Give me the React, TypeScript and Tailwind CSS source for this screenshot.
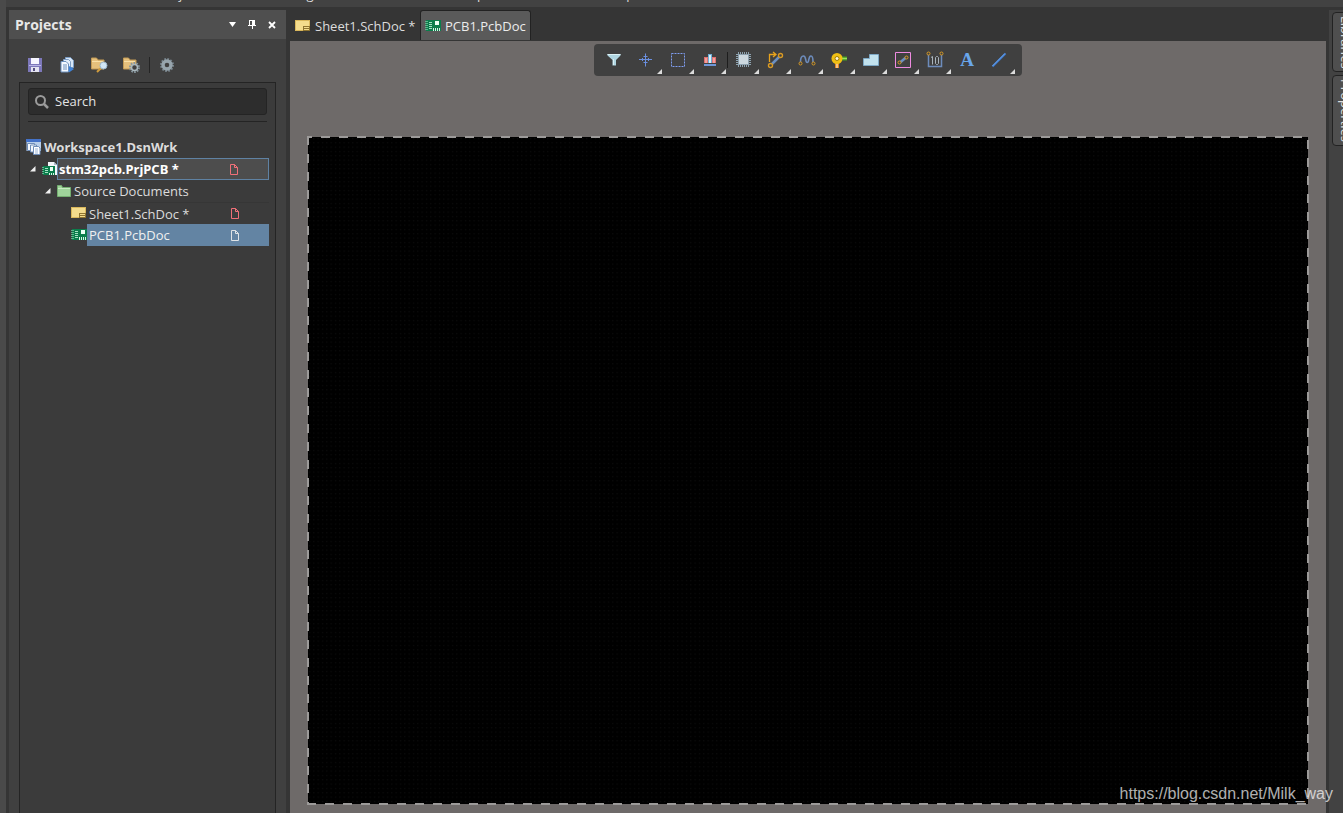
import type { ReactNode } from "react";

function PcbIcon() {
  return (
    <svg width="16" height="14" viewBox="0 0 16 14" shapeRendering="crispEdges" aria-hidden="true">
      <rect x="1" y="1" width="15" height="11" fill="#0b7d4c" />
      <path d="M0 2h3v1H0zM0 4h3v1H0zM0 6h3v1H0zM0 8h3v1H0zM0 10h3v1H0z" fill="#5fb68c" />
      <path d="M4 3h3v1H4zM4 5h3v1H4zM4 7h3v1H4zM4 9h3v1H4z" fill="#a5e0c3" />
      <rect x="10" y="2" width="4" height="4" fill="#eafff4" />
      <path d="M8 9h1v3H8zM10 9h1v3h-1zM12 9h1v3h-1zM14 9h1v3h-1z" fill="#d6f3e4" />
    </svg>
  );
}

function SheetIcon() {
  return (
    <svg width="16" height="12" viewBox="0 0 16 12" shapeRendering="crispEdges" aria-hidden="true">
      <rect x="0" y="0" width="15" height="11" fill="#d9b75c" />
      <rect x="1" y="1" width="13" height="9" fill="#f4dc8d" />
      <path d="M8 6h7v5H8z" fill="#8f7430" />
      <path d="M9 7h5v1H9zM9 9h5v1H9z" fill="#f4dc8d" />
    </svg>
  );
}

function WorkspaceIcon() {
  return (
    <svg width="16" height="16" viewBox="0 0 16 16" aria-hidden="true">
      <path d="M.5 1h14.500v11H.5z" fill="#b9cfea" />
      <path d="M0 0h15v3H0z" fill="#4472c8" />
      <path d="M1.500 4.500h7v7h-7z" fill="#f4f8fd" stroke="#6f8db8" />
      <path d="M4.500 6h6v7h-6z" fill="#f4f8fd" stroke="#6f8db8" />
      <path d="M7.500 7.500h5l1.500 1.500v6.500H7.500z" fill="#fff" stroke="#6f8db8" />
      <path d="M9 10h3M9 12h3M9 14h3" stroke="#9bb4d6" />
    </svg>
  );
}

function ProjectIcon() {
  return (
    <svg width="16" height="16" viewBox="0 0 16 16" aria-hidden="true">
      <path d="M6 1h6l3 3v10H6z" fill="#f3f6fa" />
      <path d="M12 1v3h3" fill="#aebdcc" />
      <g shapeRendering="crispEdges">
        <rect x="1" y="5" width="12" height="9" fill="#0b7d4c" />
        <path d="M0 6h2v1H0zM0 8h2v1H0zM0 10h2v1H0zM0 12h2v1H0z" fill="#5fb68c" />
        <path d="M3 7h3v1H3zM3 9h3v1H3zM3 11h3v1H3z" fill="#a5e0c3" />
        <path d="M8 6h3v4H8z" fill="#eafff4" />
        <path d="M7 12h1v2H7zM9 12h1v2H9zM11 12h1v2h-1z" fill="#d6f3e4" />
      </g>
    </svg>
  );
}

function GreenFolderIcon() {
  return (
    <svg width="14" height="12" viewBox="0 0 14 12" aria-hidden="true">
      <path d="M.5 11.500V.5h4l1 2h8v9z" fill="#9fd39a" stroke="#74ae70" />
      <path d="M1 3.500h12" stroke="#c7ebc2" />
    </svg>
  );
}

function PageIcon({ modified }: { modified: boolean }) {
  return (
    <svg
      className={modified ? "text-[#f07078]" : "text-[#dfe3e6]"}
      width="9"
      height="11"
      viewBox="0 0 9 11"
      role="img"
      aria-label={modified ? "Modified" : "Saved"}
    >
      <path d="M1.500 .5h4l3 3v7h-7zM5.500.5v3h3" fill="none" stroke="currentColor" />
    </svg>
  );
}

function SaveIcon() {
  return (
    <svg width="14" height="14" viewBox="0 0 14 14" shapeRendering="crispEdges" aria-hidden="true">
      <path d="M0 0h14v14H0z" fill="#7d78ba" />
      <path d="M3 0h8v6H3z" fill="#f6f6ff" />
      <path d="M1 7h12v1H1z" fill="#b8b4e6" />
      <path d="M3 9h8v5H3z" fill="#e4e4f2" />
      <path d="M5 10h2v3H5z" fill="#555080" />
    </svg>
  );
}

function CompileIcon() {
  return (
    <svg width="15" height="16" viewBox="0 0 15 16" aria-hidden="true">
      <path d="M5.500.5h5l3 3v7h-8z" fill="#d7e7f8" stroke="#7c9dc4" />
      <path d="M3.500 2.500h5l2 2v8h-7z" fill="#e2eefb" stroke="#7c9dc4" />
      <path d="M1 4.500h5l2.500 2.500v8H1z" fill="#f4f9ff" stroke="#6c90bd" />
      <path d="M3 8h4M3 10h4M3 12h4" stroke="#6c90bd" />
      <path d="M9 9l5 3-5 3.500z" fill="#3f83d8" />
    </svg>
  );
}

function FolderSearchIcon() {
  return (
    <svg width="17" height="16" viewBox="0 0 17 16" aria-hidden="true">
      <path d="M.5 12V1h5l1.500 2H13v9z" fill="#e5c07c" stroke="#c29a55" />
      <path d="M1 4.500h11" stroke="#f8e0a8" />
      <path d="M10 11l-4 4" stroke="#d09c3e" strokeWidth="2" />
      <circle cx="12.500" cy="8.500" r="3.500" fill="#d2e6f5" stroke="#9bb5c9" />
    </svg>
  );
}

function FolderGearIcon() {
  return (
    <svg width="17" height="16" viewBox="0 0 17 16" aria-hidden="true">
      <path d="M.5 12V1h5l1.500 2H13v9z" fill="#e5c07c" stroke="#c29a55" />
      <path d="M1 4.500h11" stroke="#f8e0a8" />
      <circle cx="11.500" cy="10.500" r="3" fill="#404040" />
      <circle cx="11.500" cy="10.500" r="4.500" fill="none" stroke="#84939b" strokeWidth="2" strokeDasharray="1.700 1.100" />
      <circle cx="11.500" cy="10.500" r="3" fill="none" stroke="#aab8be" strokeWidth="1.500" />
    </svg>
  );
}

function SettingsIcon() {
  return (
    <svg width="14" height="14" viewBox="0 0 14 14" aria-hidden="true">
      <circle cx="7" cy="7" r="6" fill="none" stroke="#77848c" strokeWidth="2" strokeDasharray="1.700 1.400" />
      <circle cx="7" cy="7" r="4" fill="none" stroke="#97a5ad" strokeWidth="3.400" />
    </svg>
  );
}

type Tool = { name: string; menu: boolean; divider?: boolean; art: ReactNode };

const tools: Tool[] = [
  {
    name: "Filter",
    menu: false,
    art: (
      <>
        <path d="M3.500 4h13v1.500L12 10v5.500H8.500V10l-5-4.500z" fill="#b0d6e2" />
        <path d="M3.500 4.500h13M9.500 9v6" stroke="#dcf1f6" />
      </>
    ),
  },
  {
    name: "Snapping",
    menu: true,
    art: <path d="M9.500 3.500v13M3 9.500h13M7.500 6.500h4M7.500 12.500h4M6.500 8v3M12.500 8v3" stroke="#6a8fe0" fill="none" />,
  },
  {
    name: "Selection",
    menu: true,
    art: <path d="M3.500 3.500h13v13h-13z" fill="none" stroke="#7f9df0" strokeDasharray="2 1" />,
  },
  {
    name: "Align",
    menu: true,
    art: (
      <g shapeRendering="crispEdges">
        <path d="M4 7h4v6H4zM12 7h4v6h-4z" fill="#e0706f" />
        <path d="M5 8h2v5H5zM13 8h2v5h-2z" fill="#f0a09c" />
        <path d="M8 4h4v9H8z" fill="#6fadd6" />
        <path d="M9 5h2v8H9z" fill="#d9f2fb" />
        <path d="M4 14h12v2H4z" fill="#6f97d8" />
      </g>
    ),
  },
  {
    name: "Component",
    menu: true,
    divider: true,
    art: (
      <g shapeRendering="crispEdges">
        <path
          d="M5 2h1v15H5zM7 2h1v15H7zM9 2h1v15H9zM11 2h1v15h-1zM13 2h1v15h-1zM15 2h1v15h-1zM3 4h15v1H3zM3 6h15v1H3zM3 8h15v1H3zM3 10h15v1H3zM3 12h15v1H3zM3 14h15v1H3z"
          fill="#8ea3b0"
        />
        <path d="M5 4h11v11H5z" fill="#8ea2b0" />
        <path d="M6 5h9v9H6z" fill="#cdd9e0" />
      </g>
    ),
  },
  {
    name: "Route",
    menu: true,
    art: (
      <>
        <path d="M4.500 12V4.500H10M8 2l3 2.500L8 7" fill="none" stroke="#e8a31c" strokeWidth="1.300" />
        <path d="M7 14l7-7" stroke="#6b8fc0" strokeWidth="2.500" />
        <circle cx="5.500" cy="15.500" r="2" fill="#404040" stroke="#d99a24" strokeWidth="1.400" />
        <circle cx="15.500" cy="5.500" r="2" fill="#404040" stroke="#d99a24" strokeWidth="1.400" />
      </>
    ),
  },
  {
    name: "Length tuning",
    menu: true,
    art: (
      <>
        <path d="M3.500 12c0-3 1-6 3-6s2 3 2.500 5 2 2 2.500 0 .5-5 2.500-5 2 3 2 6" fill="none" stroke="#6d8cbc" strokeWidth="1.600" />
        <circle cx="3.500" cy="13.500" r="1.500" fill="#404040" stroke="#d99a24" />
        <circle cx="16.500" cy="13.500" r="1.500" fill="#404040" stroke="#d99a24" />
      </>
    ),
  },
  {
    name: "Pad",
    menu: true,
    art: (
      <>
        <path d="M6 10h4v8H6z" fill="#e18424" />
        <path d="M8 12v6" stroke="#ffd9a0" strokeWidth="1.500" />
        <path d="M11 6.500h7v4h-7z" fill="#459b20" />
        <path d="M12 8.500h6" stroke="#9de060" strokeWidth="1.500" />
        <circle cx="8" cy="8.500" r="5.500" fill="#f0bf13" />
        <circle cx="8" cy="8.500" r="2" fill="#fff6d8" stroke="#9f7b08" />
      </>
    ),
  },
  {
    name: "Polygon",
    menu: true,
    art: <path d="M2.500 15.500v-7h6v-4h9v11z" fill="#c2e2ee" stroke="#7ea9c6" />,
  },
  {
    name: "Room",
    menu: true,
    art: (
      <>
        <path d="M2.500 2.500h15v15h-15z" fill="none" stroke="#ee8be0" />
        <path d="M7 12.500l6-5" stroke="#6b8fc0" strokeWidth="2.500" />
        <circle cx="6.500" cy="12.500" r="1.500" fill="#404040" stroke="#d99a24" />
        <circle cx="13.500" cy="7.500" r="1.500" fill="#404040" stroke="#d99a24" />
      </>
    ),
  },
  {
    name: "Dimension",
    menu: true,
    art: (
      <>
        <path d="M3.500 5v11.500h13V5" fill="none" stroke="#6d8cbc" strokeWidth="1.500" />
        <circle cx="3.500" cy="3.500" r="1.500" fill="none" stroke="#d99a24" />
        <circle cx="16.500" cy="3.500" r="1.500" fill="none" stroke="#d99a24" />
        <path d="M6 7.500l1.500-1v8M11.500 6.500h1l1 1v6l-1 1h-1l-1-1v-6z" fill="none" stroke="#a9b4bc" />
      </>
    ),
  },
  { name: "Text", menu: false, art: null },
  {
    name: "Line",
    menu: true,
    art: (
      <>
        <path d="M3.500 16.500L16.500 3.500" stroke="#3c78cc" strokeWidth="2" />
        <path d="M3.500 16L16 3.500" stroke="#7db0ee" strokeWidth=".8" />
      </>
    ),
  },
];

function ToolButton({ tool }: { tool: Tool }) {
  return (
    <button
      type="button"
      aria-label={tool.name}
      title={tool.name}
      className={`relative flex h-8 w-8 shrink-0 items-center justify-center ${tool.divider ? "ml-px" : ""}`}
    >
      {tool.divider && <span className="absolute top-2 left-0 h-4 w-px bg-[#1d1d1d]" />}
      {tool.art ? (
        <svg width="20" height="20" viewBox="0 0 20 20" aria-hidden="true">
          {tool.art}
        </svg>
      ) : (
        <span className="font-['Liberation_Serif',serif] text-[19px] leading-5 font-bold text-[#69a6ea]">A</span>
      )}
      {tool.menu && (
        <svg className="absolute right-0 bottom-0.5" width="5" height="5" viewBox="0 0 5 5" aria-hidden="true">
          <path d="M5 0v5H0z" fill="#dcdcdc" />
        </svg>
      )}
    </button>
  );
}

function ExpandArrow() {
  return (
    <svg width="6" height="6" viewBox="0 0 6 6" aria-hidden="true">
      <path d="M5.500 0v5.500H0z" fill="#f0f0f0" />
    </svg>
  );
}

function ProjectsPanel() {
  return (
    <aside className="mt-[3px] ml-[3px] flex w-[277px] shrink-0 flex-col bg-[#404040]">
      <header className="flex h-[29px] shrink-0 items-center bg-[#4f4f4f] pr-1 pl-1.5">
        <h2 className="flex-1 text-[14px] font-bold text-[#e8e8e8]">Projects</h2>
        <button type="button" aria-label="Panel menu" className="flex h-5 w-5 items-center justify-center">
          <svg width="7" height="5" viewBox="0 0 7 5" aria-hidden="true">
            <path d="M0 0h7L3.500 5z" fill="#fff" />
          </svg>
        </button>
        <button type="button" aria-label="Pin panel" className="flex h-5 w-5 items-center justify-center">
          <svg width="8" height="10" viewBox="0 0 8 10" shapeRendering="crispEdges" aria-hidden="true">
            <path d="M1 0h6v5h1v1H5v3H4V6H0V5h1zM2 1v4h2V1z" fill="#fff" fillRule="evenodd" />
          </svg>
        </button>
        <button type="button" aria-label="Close panel" className="flex h-5 w-5 items-center justify-center">
          <svg width="8" height="8" viewBox="0 0 8 8" aria-hidden="true">
            <path d="M1 1l6 6M7 1L1 7" stroke="#fff" strokeWidth="1.800" />
          </svg>
        </button>
      </header>

      <div className="flex h-[43px] shrink-0 items-center gap-3 pt-2 pl-4">
        <button type="button" aria-label="Save" className="flex h-5 w-5 items-center justify-center"><SaveIcon /></button>
        <button type="button" aria-label="Compile" className="flex h-5 w-5 items-center justify-center"><CompileIcon /></button>
        <button type="button" aria-label="Explore project" className="flex h-5 w-5 items-center justify-center"><FolderSearchIcon /></button>
        <button type="button" aria-label="Project options" className="flex h-5 w-5 items-center justify-center"><FolderGearIcon /></button>
        <div className="-ml-1 flex items-center gap-[7px]">
          <span className="h-4 w-px bg-[#242424]" />
          <button type="button" aria-label="Settings" className="flex h-5 w-5 items-center justify-center"><SettingsIcon /></button>
        </div>
      </div>

      <div className="mr-2.5 ml-2.5 flex flex-1 flex-col border border-b-0 border-[#242424] bg-[#3b3b3b] pt-[5px]">
        <div className="mx-2 border-b border-[#242424] pb-1.5">
          <label className="flex h-[27px] items-center gap-1.5 rounded-[3px] border border-[#242424] bg-[#2d2d2d] pl-1.5">
            <svg width="14" height="14" viewBox="0 0 14 14" role="img" aria-label="Search">
              <circle cx="5.500" cy="5.500" r="4.500" fill="none" stroke="#9b9b9b" strokeWidth="2" />
              <path d="M9 9l4 4" stroke="#9b9b9b" strokeWidth="2.500" />
            </svg>
            <input
              type="text"
              placeholder="Search"
              className="min-w-0 flex-1 bg-transparent text-[13px] text-[#e4e4e4] outline-none placeholder:text-[#e4e4e4]"
            />
          </label>
        </div>

        <ul className="mt-3.5 mr-1.5 text-[13px] leading-[22px] text-[#dcdcdc]">
          <li className="flex h-[22px] items-center gap-0.5 pl-1.5 font-['Noto_Sans',sans-serif] font-bold">
            <WorkspaceIcon />
            <span>Workspace1.DsnWrk</span>
          </li>
          <li className="flex h-[22px] items-center pl-2.5 font-['Noto_Sans',sans-serif] font-bold text-white">
            <ExpandArrow />
            <span className="ml-1.5"><ProjectIcon /></span>
            <span className="-ml-px flex h-[22px] flex-1 items-center border border-[#5f82a3] bg-[#4d4d4d] pr-[30px] pl-px">
              <span className="flex-1">stm32pcb.PrjPCB *</span>
              <PageIcon modified />
            </span>
          </li>
          <li className="flex h-[22px] items-center pl-[25px]">
            <ExpandArrow />
            <span className="mr-[3px] ml-1.5"><GreenFolderIcon /></span>
            <span>Source Documents</span>
          </li>
          <li className="flex h-[22px] items-center pl-[51px]">
            <SheetIcon />
            <span className="flex h-[22px] flex-1 items-center border-t border-[#363636] pr-[30px] pl-0.5">
              <span className="flex-1">Sheet1.SchDoc *</span>
              <PageIcon modified />
            </span>
          </li>
          <li className="flex h-[22px] items-center pl-[51px]">
            <PcbIcon />
            <span className="flex h-[22px] flex-1 items-center bg-[#6384a3] pr-[30px] pl-0.5 text-[#f0f0f0]">
              <span className="flex-1">PCB1.PcbDoc</span>
              <PageIcon modified={false} />
            </span>
          </li>
        </ul>
      </div>
    </aside>
  );
}

function Board() {
  return (
    <div className="relative mx-[17px] mt-[60px] mb-2 flex flex-1 p-px">
      <svg className="w-full flex-1 bg-black" role="img" aria-label="Board area">
        <defs>
          <pattern id="grid" width="4.333" height="4.333" patternUnits="userSpaceOnUse">
            <rect x="1" y="1" width="1" height="1" fill="#101010" />
          </pattern>
        </defs>
        <rect width="100%" height="100%" fill="url(#grid)" />
      </svg>
      <span className="absolute inset-x-0 top-0 h-0.5 bg-[repeating-linear-gradient(90deg,#9c9a99_0_5px,transparent_5px_14px,#9c9a99_14px_18px)]" />
      <span className="absolute inset-x-0 bottom-0 h-0.5 bg-[repeating-linear-gradient(90deg,#9c9a99_0_9px,transparent_9px_18px)]" />
      <span className="absolute inset-y-0 left-0 w-0.5 bg-[repeating-linear-gradient(180deg,#9c9a99_0_9px,transparent_9px_18px)]" />
      <span className="absolute inset-y-0 right-0 w-0.5 bg-[repeating-linear-gradient(180deg,transparent_0_4px,#9c9a99_4px_13px,transparent_13px_18px)]" />
    </div>
  );
}

export default function App() {
  return (
    <div className="relative flex h-screen overflow-hidden bg-[#353535] font-['Open_Sans','Noto_Sans',sans-serif] text-[#dcdcdc]">
      <div className="w-1.5 shrink-0 bg-[#4a4a4a]" />
      <div className="flex min-w-0 flex-1 flex-col">
        <nav className="flex h-[7px] shrink-0 items-end gap-6 overflow-hidden bg-[#424242] pb-[3px] pl-2 text-[13px] leading-5">
          <a href="#file">File</a>
          <a href="#edit">Edit</a>
          <a href="#view">View</a>
          <a href="#project">Project</a>
          <a href="#place">Place</a>
          <a href="#design">Design</a>
          <a href="#tools">Tools</a>
          <a href="#route">Route</a>
          <a href="#reports">Reports</a>
          <a href="#window">Window</a>
          <a href="#help">Help</a>
        </nav>

        <div className="flex min-h-0 flex-1">
          <ProjectsPanel />

          <main className="ml-1 flex min-w-0 flex-1 flex-col">
            <div className="flex h-[34px] shrink-0 items-end pb-px text-[13px] leading-[22px]">
              <button type="button" className="flex h-[30px] w-[130px] items-center gap-1 pt-px pl-[5px] whitespace-nowrap">
                <SheetIcon />
                Sheet1.SchDoc *
              </button>
              <button
                type="button"
                className="flex h-[30px] w-[111px] items-center gap-1 rounded-t-[3px] border border-b-0 border-[#222] bg-[#5a5a5a] pl-1 whitespace-nowrap text-[#ececec]"
              >
                <PcbIcon />
                PCB1.PcbDoc
              </button>
            </div>
            <div className="flex flex-1 flex-col bg-[#6e6a69] pt-[3px]">
              <div role="toolbar" aria-label="Active bar" className="flex self-center rounded bg-[#404040] pr-[7px] pl-1">
                {tools.map((tool) => (
                  <ToolButton key={tool.name} tool={tool} />
                ))}
              </div>
              <Board />
            </div>
          </main>

          <aside className="mt-[3px] ml-[3px] flex w-3.5 shrink-0 flex-col gap-[3px] overflow-hidden bg-[#424242] pt-0.5 pl-[3px] text-[13px] leading-5">
            <button type="button" className="flex h-[60px] w-7 shrink-0 items-center justify-center rounded-l border border-[#222] bg-[#4f4f4f] [writing-mode:vertical-rl]">
              Libraries
            </button>
            <button type="button" className="flex h-[71px] w-7 shrink-0 items-center justify-center rounded-l border border-[#222] bg-[#4f4f4f] [writing-mode:vertical-rl]">
              Properties
            </button>
          </aside>
        </div>
      </div>

      <span className="pointer-events-none absolute right-2.5 bottom-[7px] font-['Liberation_Sans',sans-serif] text-[16px] text-white/70">
        https://blog.csdn.net/Milk_way
      </span>
    </div>
  );
}
